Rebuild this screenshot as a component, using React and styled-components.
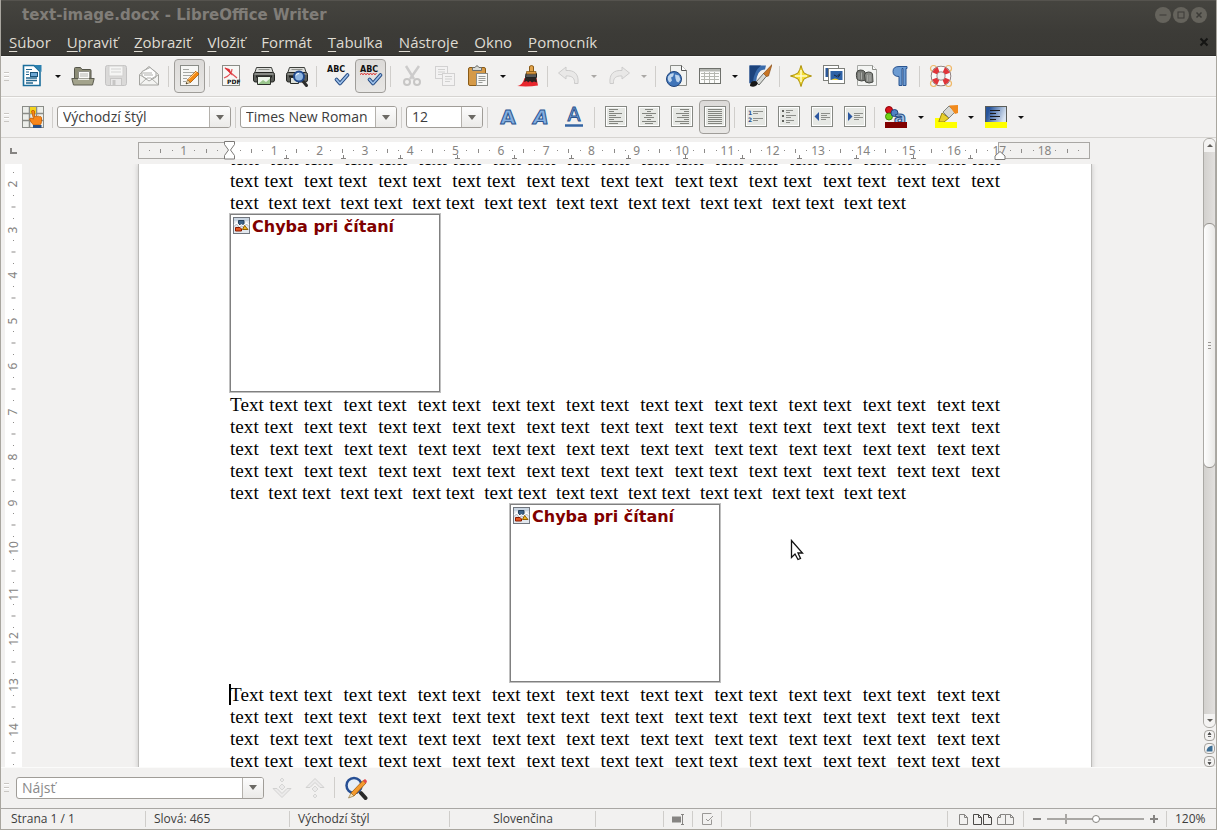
import React from 'react'
import styled, { createGlobalStyle, css } from 'styled-components';

const GlobalStyle = createGlobalStyle`
  * {
    box-sizing: border-box;
  }
  body {
    margin: 0;
    background: #f2f1f0;
  }
`;

const Window = styled.div`
  display: flex;
  flex-direction: column;
  height: 100vh;
  overflow: hidden;
  background: #f2f1f0;
  border: 1px solid #a9a69f;
  border-top: none;
  color: #3c3c3c;
  font-family: 'Open Sans', 'Noto Sans', sans-serif;
  font-size: 14px;
`;

/* title + menu */

const Header = styled.header`
  flex: none;
  margin: 0 -1px;
  height: 56px;
  background: linear-gradient(#45443f, #3c3b37 60%, #3a3935);
  border-top: 1px solid #55534e;
  border-bottom: 1px solid #2f2e2b;
`;

const TitleBar = styled.div`
  display: flex;
  align-items: center;
  height: 28px;
  padding: 0 10px 0 22px;
`;

const Title = styled.h1`
  flex: 1;
  margin: 0;
  font-family: 'DejaVu Sans', sans-serif;
  font-size: 15px;
  line-height: 24px;
  font-weight: bold;
  color: #807d78;
`;

const WindowButtons = styled.div`
  display: flex;
  gap: 2px;
`;

const WindowButton = styled.button`
  width: 16px;
  height: 16px;
  padding: 0;
  border: none;
  border-radius: 50%;
  background: #65635c;
  svg {
    display: block;
  }
`;

const MenuBar = styled.nav`
  display: flex;
  align-items: center;
  height: 26px;
  padding: 0 6px 0 9px;
`;

const MenuItem = styled.button`
  padding: 0;
  margin-right: 16px;
  border: none;
  background: none;
  color: #dfdbd2;
  font-family: inherit;
  font-size: 15px;
  line-height: 20px;
  &::first-letter {
    text-decoration: underline;
    text-underline-offset: 3px;
  }
`;

const CloseDocument = styled.button`
  margin-left: auto;
  padding: 0;
  width: 14px;
  height: 14px;
  border: none;
  background: none;
  svg {
    display: block;
  }
`;

/* toolbars */

const Toolbar = styled.div`
  flex: none;
  display: flex;
  align-items: center;
  height: 41px;
  box-shadow: inset 0 1px #fbfbfa;
  border-bottom: 1px solid #d6d4d1;
`;

const Grip = styled.span`
  width: 5px;
  height: 9px;
  margin: 0 7px 0 3px;
  background: repeating-linear-gradient(#c9c6c2 0 1px, #fff 1px 2px, transparent 2px 4px);
`;

const Separator = styled.span`
  flex: none;
  width: 8px;
  height: 21px;
  background: linear-gradient(#d0cecb, #d0cecb) 3px 0 / 1px 100% no-repeat;
`;

const ToolButton = styled.button`
  flex: none;
  display: flex;
  align-items: center;
  justify-content: center;
  width: 33px;
  height: 34px;
  padding: 0;
  border: none;
  background: none;
  svg {
    display: block;
    filter: ${p => (p.disabled ? 'grayscale(1)' : 'none')};
    opacity: ${p => (p.disabled ? 0.3 : 1)};
  }
  ${p => p.$pressed && css`
    background: linear-gradient(#dcdad8, #e8e7e5);
    background-clip: padding-box;
    border: 1px solid #9f9d99;
    border-radius: 4px;
    width: 31px;
    margin: 0 1px;
  `}
`;

const ArrowButton = styled.button`
  flex: none;
  width: 17px;
  height: 30px;
  padding: 0;
  border: none;
  background: none;
  &::after {
    content: '';
    display: block;
    width: 0;
    margin: 0 auto;
    border: 3px solid transparent;
    border-top-color: ${p => (p.disabled ? '#aaa8a5' : '#111')};
    border-bottom: none;
  }
`;

const ComboBox = styled.div`
  flex: none;
  display: flex;
  width: ${p => p.$width}px;
  height: 22px;
  margin: 0 1px 0 0;
  border: 1px solid #a09d98;
  border-radius: 3px;
  background: #fff;
  overflow: hidden;
`;

const ComboInput = styled.input`
  flex: 1;
  min-width: 0;
  padding: 0;
  margin-left: 5px;
  border: none;
  outline: none;
  background: none;
  color: #3c3c3c;
  font-family: inherit;
  font-size: 14px;
  line-height: 20px;
  &::placeholder {
    color: #8a8a8a;
  }
`;

const ComboArrow = styled.button`
  flex: none;
  width: 21px;
  padding: 0;
  border: none;
  border-left: 1px solid #b4b1ac;
  background: linear-gradient(#fcfcfc, #ebeae8);
  &::after {
    content: '';
    display: block;
    width: 0;
    margin: 0 auto;
    border: 4px solid transparent;
    border-top: 5px solid #6b6964;
    border-bottom: none;
  }
`;

/* document area */

const Main = styled.main`
  flex: 1;
  min-height: 0;
  display: flex;
`;

const WorkArea = styled.div`
  flex: 1;
  min-width: 0;
  display: grid;
  grid-template-columns: 21px 1fr;
  grid-template-rows: 26px 1fr;
`;

const RulerCorner = styled.div`
  padding: 10px 0 0 9px;
  svg {
    display: block;
  }
`;

const RulerRow = styled.div`
  padding: 4px 0 5px 3px;
`;

const Ruler = styled.div`
  position: relative;
  display: grid;
  width: 952px;
  height: 17px;
  margin: 0 auto;
`;

const Bands = styled.div`
  grid-area: 1 / 1;
  display: flex;
`;

const Band = styled.div`
  flex: ${p => p.$cm};
  background: ${p => (p.$margin ? '#f2f1f0' : '#fff')};
  border: ${p => (p.$margin ? '1px solid #a9a7a4' : 'none')};
  display: flex;
  align-items: flex-end;
`;

const TabStop = styled.span`
  flex: 0 0 57px;
  height: 4px;
  display: flex;
  justify-content: flex-end;
  svg {
    display: block;
    margin-right: -2px;
  }
`;

const Scale = styled.div`
  grid-area: 1 / 1;
  display: flex;
  align-items: center;
  padding: 0 6px;
`;

const scaleMark = css`
  flex: 1;
  min-width: 0;
  min-height: 0;
  display: flex;
  align-items: center;
  justify-content: center;
  color: #868482;
  font-family: 'Noto Sans', sans-serif;
  font-size: 12px;
  line-height: 16px;
  white-space: nowrap;
`;

const Mark = styled.span`
  ${scaleMark}
`;

const Tick = styled.i`
  flex: none;
  width: 1px;
  height: ${p => (p.$half ? 4 : 1)}px;
  background: #8e8c8a;
`;

const VerticalRuler = styled.div`
  min-height: 0;
  margin-left: 4px;
  overflow: hidden;
  background: #fff;
`;

const VerticalScale = styled.div`
  display: flex;
  flex-direction: column;
  height: 100%;
  margin-top: 3px;
`;

const VerticalMark = styled.span`
  ${scaleMark}
  span, i {
    transform: rotate(-90deg);
  }
`;

const IndentMarker = styled.svg`
  position: absolute;
  left: ${p => p.$left};
  top: -1px;
  margin-left: -6px;
`;

const Canvas = styled.div`
  position: relative;
  min-height: 0;
  overflow: hidden;
  padding-left: 5px;
`;

const Paper = styled.article`
  display: flow-root;
  width: 952px;
  min-height: 100%;
  margin: 0 auto;
  padding: 0 91px;
  background: #fff;
  box-shadow: 0 0 0 1px #bcbbb9, 0 0 6px rgba(0, 0, 0, 0.25);
`;

const DocumentText = styled.div`
  margin-top: -16px;
  font-size: 16px;
`;

/* 12pt shown at the 120% zoom level */
const Paragraph = styled.p`
  position: relative;
  margin: 0;
  color: #000;
  font-family: 'Liberation Serif', serif;
  font-size: 120%;
  line-height: 22px;
  text-align: justify;
  white-space: pre-wrap;
`;

const Caret = styled.span`
  position: absolute;
  left: -1px;
  top: 0;
  width: 2px;
  height: 21px;
  background: #000;
`;

const BrokenImage = styled.figure`
  display: flex;
  width: 210px;
  height: 178px;
  margin: 0 ${p => (p.$center ? 'auto' : '0')} 2px;
  padding: 2px;
  border: 1px solid #808080;
  box-shadow: 0 0 0 1px #c0c0c0;
  color: #800000;
  font-family: 'DejaVu Sans', sans-serif;
  font-size: 16px;
  line-height: 20px;
  font-weight: bold;
  svg {
    flex: none;
    display: block;
    margin-right: 2px;
  }
`;

const Pointer = styled.svg`
  position: absolute;
  left: 768px;
  top: 375px;
`;

/* scrollbar */

const ScrollColumn = styled.div`
  flex: none;
  width: 13px;
  display: flex;
  flex-direction: column;
  align-items: center;
`;

const ScrollBar = styled.div`
  flex: 1;
  width: 13px;
  display: flex;
  flex-direction: column;
  border: 1px solid #aba9a5;
  border-radius: 6px;
  background: linear-gradient(90deg, #d3d1ce, #e2e0de);
  overflow: hidden;
`;

const ScrollArrow = styled.button`
  flex: none;
  height: 13px;
  padding: 0;
  border: none;
  background: #f4f3f2;
  &::after {
    content: '';
    display: block;
    width: 0;
    margin: 0 auto;
    border: 3px solid transparent;
    ${p => (p.$up
    ? 'border-top: none; border-bottom-color: #5f5d59;'
    : 'border-bottom: none; border-top-color: #5f5d59;')}
  }
`;

const Trough = styled.div`
  flex: ${p => p.$size};
`;

const ScrollThumb = styled.div`
  flex: ${p => p.$size};
  display: flex;
  align-items: center;
  justify-content: center;
  margin: 0 -1px;
  border: 1px solid #96938e;
  border-radius: 6px;
  background: linear-gradient(90deg, #fdfdfd, #e9e8e6);
  &::after {
    content: '';
    width: 3px;
    height: 7px;
    background: repeating-linear-gradient(#9b9894 0 1px, transparent 1px 3px);
  }
`;

const PageButton = styled.button`
  flex: none;
  width: 11px;
  height: 11px;
  margin: 2px 0 0;
  padding: 0;
  border: 1px solid #a3a09b;
  border-radius: 4px;
  background: #f4f3f2;
  svg {
    display: block;
  }
`;

/* find bar and status bar */

const FindBar = styled.div`
  flex: none;
  display: flex;
  align-items: center;
  height: 41px;
  box-shadow: inset 0 1px #fbfbfa;
`;

const StatusBar = styled.footer`
  flex: none;
  display: flex;
  height: 21px;
  border-top: 1px solid #a9a7a4;
  font-size: 12px;
  line-height: 20px;
`;

const StatusCell = styled.div`
  flex: ${p => (p.$grow ? 1 : `0 0 ${p.$width}px`)};
  min-width: 0;
  display: flex;
  align-items: center;
  justify-content: ${p => p.$align || 'flex-start'};
  padding: 0 8px;
  gap: ${p => p.$gap || 0}px;
  white-space: nowrap;
  background: linear-gradient(#cfcdca, #cfcdca) 100% 2px / 1px 16px no-repeat;
  &:first-child {
    padding-left: 10px;
  }
  &:last-child {
    background: none;
  }
`;

const PlainButton = styled.button`
  flex: none;
  padding: 0;
  border: none;
  background: none;
  svg {
    display: block;
  }
`;

const ZoomSlider = styled.input`
  appearance: none;
  flex: 1;
  min-width: 0;
  height: 12px;
  margin: 0;
  background:
    linear-gradient(#a9a7a4, #a9a7a4) 18px 50% / 2px 10px no-repeat,
    linear-gradient(#a9a7a4, #a9a7a4) 0 50% / 100% 2px no-repeat;
  &::-webkit-slider-thumb {
    appearance: none;
    width: 8px;
    height: 8px;
    border: 1px solid #85837f;
    border-radius: 50%;
    background: #fff;
  }
`;

const Icon = ({ children, size = 24 }) => (
  <svg width={size} height={size} viewBox={`0 0 ${size} ${size}`} aria-hidden="true">{children}</svg>
)

const Sheet = ({ x = 2.5, y = 1.5, w = 18, h = 20 }) => (
  <rect x={x} y={y} width={w} height={h} fill="#f7f7f5" stroke="#8a8c87" />
)

const NewIcon = () => (
  <Icon>
    <path d="M2.500 1.500h10.500l6 6V21.500H2.500z" fill="#fff" stroke="#1b6e9c" strokeWidth="1.600" />
    <path d="M13 1h7.500v7z" fill="#2c81b0" />
    <path d="M5 5.500h6M5 8h3M5 10.500h3" stroke="#24678f" strokeWidth="1" />
    <path d="M5 14h11M5 16.500h11M5 19h7" stroke="#24678f" strokeWidth="1.300" />
    <rect x="9.500" y="8.500" width="7" height="4" fill="#6fa8d4" stroke="#1c5479" />
  </Icon>
)

const OpenIcon = () => (
  <Icon>
    <path d="M3.500 4.500q0-1 1-1h5l1.500 2h8q1 0 1 1V19h-16.500z" fill="#8c8c76" stroke="#55554a" />
    <path d="M7.500 7.500h11V17h-11z" fill="#fafaf8" stroke="#8e8e86" />
    <path d="M9 10h8M9 12h8" stroke="#b5b5b0" />
    <path d="M.800 14.500h22.400l-1.700 6.500H2.500z" fill="#a3a38c" stroke="#5c5c50" />
    <path d="M7 14.500h11v1.500H7z" fill="#e9e9e2" />
  </Icon>
)

const SaveIcon = () => (
  <Icon>
    <rect x="1.500" y="1.500" width="21" height="20" rx="2" fill="#a4a4a4" stroke="#5a5a5a" />
    <rect x="5" y="2" width="14" height="10" fill="#fff" stroke="#8a8a8a" />
    <path d="M7 5h10M7 8h10" stroke="#8f8f8f" />
    <rect x="6.500" y="14.500" width="11" height="7" fill="#d6d6d6" stroke="#666" />
    <rect x="8.500" y="16" width="3" height="5" fill="#666" />
  </Icon>
)

const MailIcon = () => (
  <Icon>
    <path d="M2.500 10.500 12 2.500l9.500 8v10.500h-19z" fill="#f4f4f2" stroke="#a4a4a0" />
    <path d="M5 12V7.500l8-4 6 5V13l-7 4z" fill="#fff" stroke="#a7a7a4" />
    <path d="m3 20.500 7-6.500h4l7 6.500M3 11l7 4M21 11l-7 4M6 9h9M7 11h9" fill="none" stroke="#b0b0ad" />
  </Icon>
)

const Pencil = () => (
  <>
    <path d="m9.500 16 8.500-9 3 3-8.500 8.500z" fill="#f58a13" stroke="#a85600" strokeWidth=".8" />
    <path d="m10.500 15.500 8.500-8.500" stroke="#ffd089" />
    <path d="m9.500 16-1.500 4 4.500-1.500z" fill="#f5dfb5" stroke="#7a5a20" strokeWidth=".6" />
    <path d="m8 20 .6-1.700 1 1.100z" fill="#222" />
  </>
)

const EditIcon = () => (
  <Icon>
    <Sheet x={2.5} />
    <path d="M5 5.500h6M5 8.500h11M5 11.500h9M5 14.500h4M5 17.500h3" stroke="#a5a7a3" />
    <Pencil />
  </Icon>
)

const PdfIcon = () => (
  <Icon>
    <Sheet x={3.5} w={17} />
    <path d="m6 4 12 10M13 5c0 4-3 7-8 9" stroke="#d9262c" strokeWidth="1.200" opacity=".8" fill="none" />
    <path d="m5.500 3.500 5 1.500 3 7z" fill="#e03036" />
    <text x="8" y="20" fontFamily="DejaVu Sans, sans-serif" fontSize="6" fontWeight="bold" fill="#111">PDF</text>
  </Icon>
)

const Printer = () => (
  <>
    <path d="M4.500 3.500h15l2 6h-19z" fill="#dcddda" stroke="#3e403c" />
    <path d="M6.500 5.500h11" stroke="#8f918c" />
    <rect x="1.500" y="8.500" width="21" height="9.500" rx="2" fill="#5b5d59" stroke="#232421" />
    <path d="M2.500 10h19" stroke="#b5b7b2" />
    <path d="M4 12.500h16" stroke="#1d1e1c" strokeWidth="2" />
  </>
)

const PrintIcon = () => (
  <Icon>
    <Printer />
    <path d="M5.500 12.500h13v8h-13z" fill="#eef5eb" stroke="#2b2d29" />
    <path d="m6 20 5-4 3 2 4-3.500v5.500z" fill="#9ac68d" />
  </Icon>
)

const PreviewIcon = () => (
  <Icon>
    <Printer />
    <path d="M5.500 13.500h8v6h-8z" fill="#dfe3dc" stroke="#2b2d29" />
    <path d="m17.500 16.500 4 5" stroke="#2c2c2c" strokeWidth="3" strokeLinecap="round" />
    <circle cx="14" cy="12.500" r="5" fill="#8fb6e2" stroke="#224a8c" strokeWidth="2" />
    <path d="M11 11.500a3 3 0 0 1 3-2" stroke="#fff" fill="none" />
  </Icon>
)

const SpellIcon = ({ auto }) => (
  <Icon>
    <text x="1" y="8" fontFamily="DejaVu Sans, sans-serif" fontSize="8" fontWeight="bold" fill="#111">ABC</text>
    {auto && <path d="m1 10.500 1.500-1 1.500 1 1.500-1 1.500 1 1.500-1 1.500 1 1.500-1 1.500 1 1.500-1 1.500 1 1.500-1" stroke="#e01818" fill="none" />}
    <path d="m10.500 15.500 3.500 4 7.500-8.500" fill="none" stroke="#234a83" strokeWidth="3.600" strokeLinecap="round" strokeLinejoin="round" />
    <path d="m10.500 15.500 3.500 4 7.500-8.500" fill="none" stroke="#9cbfe8" strokeWidth="1.800" strokeLinecap="round" strokeLinejoin="round" />
  </Icon>
)

const CutIcon = () => (
  <Icon>
    <path d="m6 2 8 13M19 2l-9 13" stroke="#777" strokeWidth="2.500" />
    <circle cx="7" cy="18" r="3" fill="none" stroke="#666" strokeWidth="2" />
    <circle cx="17" cy="18" r="3" fill="none" stroke="#666" strokeWidth="2" />
  </Icon>
)

const CopyIcon = () => (
  <Icon>
    <Sheet x={2.5} y={2.5} w={12} h={12} />
    <path d="M5 5.500h7M5 8h7M5 10.500h5" stroke="#888" />
    <Sheet x={9.5} y={9.5} w={12} h={12} />
    <path d="M12 12.500h7M12 15h7M12 17.500h5" stroke="#888" />
  </Icon>
)

const PasteIcon = () => (
  <Icon>
    <rect x="2.500" y="3.500" width="17" height="18" rx="1.500" fill="#d59a48" stroke="#8a5b17" />
    <path d="M6.500 6.500v-3h2.500q2-3.500 4 0h2.500v3z" fill="#d8dad6" stroke="#6c6e6a" />
    <Sheet x={10.5} y={9.5} w={11} h={12} />
    <path d="M12.500 12.500h7M12.500 14.500h7M12.500 16.500h7M12.500 18.500h4" stroke="#999b97" />
  </Icon>
)

const BrushIcon = () => (
  <Icon>
    <path d="M1 22c4-.5 6-3 7.500-8h12l1.500 7.500q-10 1.500-21 .5z" fill="#e8262d" />
    <path d="m9.500 13-1.500 5 3-1 1 1.500 2-1.500 2 1.500 2-1 3 1-1-5.500z" fill="#2a2322" />
    <path d="M10 9.500h10.500v4H9.500z" fill="#55575a" stroke="#222" />
    <path d="M13.500 8V5q-1-3.500 2-3.500t2 3.500v3z" fill="#e0a24a" stroke="#8a5b17" />
    <path d="M10.500 7.500h9.500v2.500h-9.500z" fill="#d9963e" stroke="#7c5213" strokeWidth=".7" />
  </Icon>
)

const UndoIcon = ({ flip }) => (
  <Icon>
    <path
      d="M1.500 9 9 3v3.500c8-.500 13 3 12 13h-3.500c.500-5-2-8-8.500-7.500V15z"
      fill="#d5d5d5"
      stroke="#777"
      transform={flip ? 'translate(24 0) scale(-1 1)' : undefined}
    />
  </Icon>
)

const LinkIcon = () => (
  <Icon>
    <path d="M5.500 1.500h11l5 5v15h-16z" fill="#f2f3f1" stroke="#8a8c87" />
    <path d="M16.500 1.500v5h5" fill="#fff" stroke="#555" />
    <circle cx="9" cy="15" r="7.500" fill="#3f74b8" stroke="#1f447c" />
    <path d="M3 12.500q3-4 6-3l-1 3-2 1 1 3-2 2q-3-2-2-6zM10 10.500l4 1 1.500 4-2 3-2-1-1-3z" fill="#bfd6ee" />
  </Icon>
)

const TableIcon = () => (
  <Icon>
    <rect x="1.500" y="4.500" width="21" height="15" fill="#fcfcfb" stroke="#6f716c" />
    <path d="M2 5h20v2.500H2z" fill="#b5b7b2" />
    <path d="M3 9.500h18M3 12.500h18M3 15.500h18M6.500 8v11M11.500 8v11M16.500 8v11" stroke="#b5b7b1" />
  </Icon>
)

const DrawIcon = () => (
  <Icon>
    <path d="M1.500 1.500H18l-1 4q-8 0-9 13l-6.500 1z" fill="#3a6bab" />
    <path d="M1.500 1.500H13Q6 7 5 18l-3.500 1z" fill="#1c437c" />
    <path d="m8 18 8-9 3 2.500L11 21z" fill="#d8dad7" stroke="#6c6e6a" />
    <path d="m15.500 9.500 8.500-9-3.500 11.500-2 .5z" fill="#c77424" stroke="#7c4510" strokeWidth=".6" />
    <path d="M2 22q0-5 5-5 4 1 2 4-3 3-7 1z" fill="#171717" />
  </Icon>
)

const StarIcon = () => (
  <Icon>
    <path d="M12 1.500q1 4 3 7.500 3.500 2 7.500 3-4 1-7.500 3-2 3.500-3 7.500-1-4-3-7.500-3.500-2-7.500-3 4-1 7.500-3 2-3.500 3-7.500z" fill="#f3dc33" stroke="#ad9108" strokeLinejoin="round" />
    <path d="M12 6v12M6 12h12" stroke="#fffbd0" strokeWidth="1.500" />
  </Icon>
)

const GalleryIcon = () => (
  <Icon>
    <rect x="1.500" y="1.500" width="15" height="15" fill="#fff" stroke="#7d7f7a" />
    <rect x="3.500" y="4" width="11" height="9" fill="#2b5796" />
    <rect x="6.500" y="4.500" width="16" height="15" fill="#fff" stroke="#7d7f7a" />
    <rect x="8.500" y="7" width="12" height="9" fill="#2f62a6" />
    <path d="M9 16q4-3 8 0z" fill="#f0cf38" />
    <path d="m12 11 3 1.500 3-3M16 13.500l2-3" stroke="#16263f" fill="none" />
  </Icon>
)

const FindIcon = () => (
  <Icon>
    <path d="M2.500 1.500h15l4 4v16h-19z" fill="#f4f5f3" stroke="#a5a7a3" />
    <path d="M17.500 1.500v4h4" fill="#fff" stroke="#8a8c87" />
    <path d="M1.500 9q.5-3 4-3t4.500 2l1 8q-5 2-8 0-2-1-1.500-7z" fill="#747672" stroke="#454743" />
    <path d="M9.500 11q.5-3 4-3t4 2l.500 8q-4 2-7.500 0z" fill="#8a8c88" stroke="#454743" />
    <path d="M4 8.500v7M6.500 8.500v7M12.500 11v6M15 11v6" stroke="#a9aba7" />
  </Icon>
)

const PilcrowIcon = () => (
  <Icon>
    <path d="M11 12.500Q5 12.500 5 7.500q0-5 6-5h8v2h-1v17h-3v-17h-1v17h-3z" fill="#6c9bd2" stroke="#2a5490" />
  </Icon>
)

const HelpIcon = () => (
  <Icon>
    <g fill="none" stroke="#efb868" strokeWidth="1.200">
      <circle cx="4.500" cy="4.500" r="3" /><circle cx="19.500" cy="4.500" r="3" />
      <circle cx="4.500" cy="19.500" r="3" /><circle cx="19.500" cy="19.500" r="3" />
    </g>
    <circle cx="12" cy="12" r="7" fill="#f2f1f0" stroke="#7c6a6a" strokeWidth="6.600" />
    <circle cx="12" cy="12" r="7" fill="none" stroke="#fafafa" strokeWidth="5" />
    <circle cx="12" cy="12" r="7" fill="none" stroke="#e0353a" strokeWidth="5" strokeDasharray="5.500 5.500" strokeDashoffset="-2.750" />
  </Icon>
)

const StylesIcon = () => (
  <Icon>
    <rect x="1.500" y="1.500" width="21" height="21" fill="#eceeea" stroke="#8a8c87" />
    <path d="M8.500 2v20M15.500 2v20M2 8.500h20M2 15.500h20" stroke="#8a8c87" strokeWidth="1.500" />
    <rect x="9" y="2" width="6" height="6.500" fill="#f4d31f" />
    <path d="M10.500 6q1.500-1.500 3 0v6l1-.5q1-1 2 0 1-.8 2 .2 1.500-.5 2 .8v4q0 3-2 3.500h-6q-3-3-4-6 1-2 4 0z" fill="#f7861b" stroke="#c25a00" strokeWidth=".8" />
    <path d="M12 20h8.500v3H12z" fill="#274f86" />
  </Icon>
)

const LetterIcon = ({ italic, underline }) => (
  <Icon>
    <text
      x="11"
      y={underline ? 16 : 19}
      textAnchor="middle"
      fontFamily="DejaVu Sans, sans-serif"
      fontSize={underline ? 19 : 20}
      fontWeight={underline ? 'normal' : 'bold'}
      fontStyle={italic ? 'italic' : 'normal'}
      fill="#83aee0"
      stroke="#2a5490"
      strokeWidth="1"
    >A</text>
    {underline && <path d="M2 20.500h18" stroke="#3465a4" strokeWidth="2.500" />}
  </Icon>
)

const alignments = {
  left: [[5, 14], [5, 10], [5, 18], [5, 12], [5, 17], [5, 10], [5, 19], [5, 14]],
  center: [[8, 16], [10, 14], [5, 19], [9, 15], [7, 17], [10, 14], [5, 19], [8, 16]],
  right: [[10, 19], [14, 19], [6, 19], [12, 19], [7, 19], [14, 19], [5, 19], [10, 19]],
  justify: [[5, 19], [5, 19], [5, 19], [5, 19], [5, 19], [5, 19], [5, 19], [5, 19]],
}

const Board = () => (
  <>
    <rect x="1.500" y="1.500" width="21" height="20" fill="#fff" stroke="#868883" />
    <rect x="3" y="3" width="18" height="17" fill="#e6e8e4" />
  </>
)

const AlignIcon = ({ kind }) => (
  <Icon>
    <Board />
    {alignments[kind].map(([a, b], i) => (
      <path key={i} d={`M${a} ${4.5 + i * 2}H${b}`} stroke="#83857f" />
    ))}
  </Icon>
)

const NumberingIcon = () => (
  <Icon>
    <Board />
    <text x="4" y="10" fontFamily="DejaVu Sans, sans-serif" fontSize="6" fontWeight="bold" fill="#2a5490">1</text>
    <text x="4" y="17" fontFamily="DejaVu Sans, sans-serif" fontSize="6" fontWeight="bold" fill="#2a5490">2</text>
    <path d="M9 6.500h10M9 8.500h5M9 13.500h10M9 15.500h5" stroke="#8d8f8a" />
  </Icon>
)

const BulletsIcon = () => (
  <Icon>
    <Board />
    <path d="M5 6h2M5 11h2M5 16h2" stroke="#60625d" strokeWidth="2" />
    <path d="M9 5.500h7M9 7.500h4M9 10.500h10M9 12.500h5M9 15.500h8M9 17.500h4" stroke="#8d8f8a" />
  </Icon>
)

const IndentIcon = ({ more }) => (
  <Icon>
    <Board />
    <path d={more ? 'M5 7v9l4.500-4.500z' : 'M9 7v9l-4.500-4.500z'} fill="#2b57a0" />
    <path d="M11 8.500h9M11 10.500h6M11 12.500h9M11 14.500h5" stroke="#8d8f8a" />
  </Icon>
)

const FontColorIcon = () => (
  <Icon>
    <circle cx="5" cy="5" r="3.500" fill="#d8121b" stroke="#8d0007" />
    <circle cx="5" cy="11.500" r="3.500" fill="#73d216" stroke="#3f8a03" />
    <circle cx="10.500" cy="8" r="3.500" fill="#4f82c4" stroke="#1f447c" />
    <text x="10" y="19" fontFamily="DejaVu Sans, sans-serif" fontSize="18" fontWeight="bold" fill="#a4c2e6" stroke="#234a83">a</text>
    <path d="M1 17h22v6H1z" fill="#800000" />
  </Icon>
)

const HighlightIcon = () => (
  <Icon>
    <path d="M1 13h8v5H1z" fill="#ff0" />
    <path d="m5 16 3-8 7 5-5 4H5z" fill="#e8cf2a" stroke="#9b860a" />
    <path d="m9 7 6-6 6 6-6 6z" fill="#d6d8d4" stroke="#82847f" />
    <path d="m15 .5 9-.5V8l-3 1z" fill="#f18a1c" />
    <path d="M1 17h22v6H1z" fill="#ff0" />
  </Icon>
)

const BackgroundIcon = () => (
  <Icon>
    <defs>
      <linearGradient id="blues" x1="0" x2="1" y1="0" y2=".3">
        <stop offset=".2" stopColor="#27549a" />
        <stop offset="1" stopColor="#d9e4f1" />
      </linearGradient>
    </defs>
    <rect x="1.500" y="1.500" width="21" height="18" fill="url(#blues)" stroke="#5b5d59" />
    <path d="M6 5.500h10M6 8.500h6M6 11.500h10M6 14.500h6" stroke="#1a1a1a" />
    <path d="M1 17h22v6H1z" fill="#ff0" />
  </Icon>
)

const FindStepIcon = ({ up }) => (
  <Icon>
    <g transform={up ? 'translate(0 24) scale(1 -1)' : undefined}>
      <path d="M3 12.500h4l5 5 5-5h4l-9 9z" fill="#ddd" stroke="#888" />
      <path d="m12 2 2 2-2 2-2-2zM12 8l3 3-3 3-3-3z" fill="#ddd" stroke="#999" />
    </g>
  </Icon>
)

const ReplaceIcon = () => (
  <Icon>
    <path d="m17 17 4.500 5" stroke="#2a2a2a" strokeWidth="4" strokeLinecap="round" />
    <circle cx="10" cy="9.500" r="7.500" fill="#e6eef8" stroke="#274f94" strokeWidth="2.500" />
    <path d="m7 17 12-12.500 3 2.500-12 13z" fill="#f39a2f" stroke="#a35c07" strokeWidth=".8" />
    <path d="m19 4.500 2-1.500q2 1 2 3l-1.500 1.500z" fill="#e34a4a" />
    <path d="m7 17-2.500 5 5.500-2z" fill="#f3dfb6" stroke="#8a682b" strokeWidth=".6" />
  </Icon>
)

const BrokenIcon = () => (
  <svg width="17" height="17" viewBox="0 0 17 17" aria-hidden="true">
    <rect x=".5" y=".5" width="16" height="16" fill="#e3e8ee" stroke="#70767e" />
    <path d="M1 1h15v3H1z" fill="#c9d5e2" />
    <path d="M5.500 3.500h5.500v3l-2 2h-1.500l-2-2z" fill="#3e6489" stroke="#243f5a" />
    <path d="m1 8.500 2.500-2.500 3 3.500 2-1.500 2 1.500 3-3.500 2.500 2.500" fill="none" stroke="#fff" strokeWidth="1.500" />
    <path d="m1 9.500 2.500-2.500 3 3.500 2-1.500 2 1.500 3-3.500 2.500 2.500" fill="none" stroke="#9aa1a9" strokeWidth=".8" />
    <path d="M2.500 10.500h4.500l1.500 1.500v2h-6z" fill="#e2531f" stroke="#8b1a00" />
    <path d="m9.500 12.500 2-4 3.500 4z" fill="#f3b51b" stroke="#8d5c00" />
  </svg>
)

const standardTools = [
  { label: 'Nový', icon: <NewIcon />, arrow: true },
  { label: 'Otvoriť', icon: <OpenIcon /> },
  { label: 'Uložiť', icon: <SaveIcon />, disabled: true },
  { label: 'Odoslať', icon: <MailIcon /> },
  'separator',
  { label: 'Upraviť súbor', icon: <EditIcon />, pressed: true },
  'separator',
  { label: 'Exportovať do PDF', icon: <PdfIcon /> },
  { label: 'Tlačiť', icon: <PrintIcon /> },
  { label: 'Ukážka strany', icon: <PreviewIcon /> },
  'separator',
  { label: 'Kontrola pravopisu', icon: <SpellIcon /> },
  { label: 'Automatická kontrola', icon: <SpellIcon auto />, pressed: true },
  'separator',
  { label: 'Vystrihnúť', icon: <CutIcon />, disabled: true },
  { label: 'Kopírovať', icon: <CopyIcon />, disabled: true },
  { label: 'Prilepiť', icon: <PasteIcon />, arrow: true },
  { label: 'Štetec formátu', icon: <BrushIcon /> },
  'separator',
  { label: 'Späť', icon: <UndoIcon />, arrow: true, disabled: true },
  { label: 'Obnoviť', icon: <UndoIcon flip />, arrow: true, disabled: true },
  'separator',
  { label: 'Odkaz', icon: <LinkIcon /> },
  { label: 'Tabuľka', icon: <TableIcon />, arrow: true },
  { label: 'Kresba', icon: <DrawIcon /> },
  'separator',
  { label: 'Navigátor', icon: <StarIcon /> },
  { label: 'Galéria', icon: <GalleryIcon /> },
  { label: 'Hľadať', icon: <FindIcon /> },
  { label: 'Netlačiteľné znaky', icon: <PilcrowIcon /> },
  'separator',
  { label: 'Pomocník', icon: <HelpIcon /> },
]

const formatTools = [
  { label: 'Tučné', icon: <LetterIcon /> },
  { label: 'Kurzíva', icon: <LetterIcon italic /> },
  { label: 'Podčiarknuté', icon: <LetterIcon underline /> },
  'separator',
  { label: 'Zarovnať vľavo', icon: <AlignIcon kind="left" /> },
  { label: 'Na stred', icon: <AlignIcon kind="center" /> },
  { label: 'Zarovnať vpravo', icon: <AlignIcon kind="right" /> },
  { label: 'Do bloku', icon: <AlignIcon kind="justify" />, pressed: true },
  'separator',
  { label: 'Číslovanie', icon: <NumberingIcon /> },
  { label: 'Odrážky', icon: <BulletsIcon /> },
  { label: 'Zmenšiť odsadenie', icon: <IndentIcon /> },
  { label: 'Zväčšiť odsadenie', icon: <IndentIcon more /> },
  'separator',
  { label: 'Farba písma', icon: <FontColorIcon />, arrow: true },
  { label: 'Zvýraznenie', icon: <HighlightIcon />, arrow: true },
  { label: 'Farba pozadia', icon: <BackgroundIcon />, arrow: true },
]

const Tools = ({ items }) => items.map((item, i) => (
  item === 'separator' ? <Separator key={i} /> : (
    <React.Fragment key={i}>
      <ToolButton aria-label={item.label} disabled={item.disabled} $pressed={item.pressed}>{item.icon}</ToolButton>
      {item.arrow && <ArrowButton aria-label={`${item.label}, možnosti`} disabled={item.disabled} />}
    </React.Fragment>
  )
))

const Combo = ({ label, width, ...rest }) => (
  <ComboBox $width={width}>
    <ComboInput aria-label={label} {...rest} />
    <ComboArrow aria-label={`${label}, zoznam`} />
  </ComboBox>
)

const menu = ['Súbor', 'Upraviť', 'Zobraziť', 'Vložiť', 'Formát', 'Tabuľka', 'Nástroje', 'Okno', 'Pomocník']

const pairs = count => Array(count).fill('text text').join('  ')

const paragraph = 'Text ' + pairs(51)
const paragraphEnd = 'text  ' + pairs(30)

// one mark per quarter of a centimetre, a number on every fourth
const horizontalMarks = Array.from({ length: 83 }, (_, i) => i + 1)
const verticalMarks = Array.from({ length: 53 }, (_, i) => i + 7)

const HorizontalRuler = () => (
  <Ruler>
    <Bands>
      <Band $cm={2} $margin />
      <Band $cm={17}>
        {Array.from({ length: 13 }, (_, i) => (
          <TabStop key={i}>
            <svg width="5" height="4" aria-hidden="true"><path d="M2.500 0v3M0 3.500h5" stroke="#868482" /></svg>
          </TabStop>
        ))}
      </Band>
      <Band $cm={2} $margin />
    </Bands>
    <Scale>
      {horizontalMarks.map(q => (
        <Mark key={q}>
          {q % 4 ? <Tick $half={q % 4 === 2} /> : q !== 8 && Math.abs(q / 4 - 2)}
        </Mark>
      ))}
    </Scale>
    <IndentMarker $left="92px" width="12" height="19" aria-hidden="true">
      <path d="M.500.500h10v3l-4 5.500 4 5.500v3.500H.500V14.500l4-5.500-4-5.500z" fill="#fff" stroke="#7c7a78" />
    </IndentMarker>
    <IndentMarker $left="calc(100% - 90px)" width="12" height="19" aria-hidden="true">
      <path d="M6 10.500 11 15v3.500H1V15z" fill="#fff" stroke="#7c7a78" />
    </IndentMarker>
  </Ruler>
)

const App = () => {
  return (
    <Window>
      <GlobalStyle />
      <Header>
        <TitleBar>
          <Title>text-image.docx - LibreOffice Writer</Title>
          <WindowButtons>
            <WindowButton aria-label="Minimalizovať">
              <Icon size={16}><path d="M4.500 8h7" stroke="#3c3b37" /></Icon>
            </WindowButton>
            <WindowButton aria-label="Maximalizovať">
              <Icon size={16}><rect x="5" y="5" width="6" height="6" fill="none" stroke="#3c3b37" /></Icon>
            </WindowButton>
            <WindowButton aria-label="Zavrieť">
              <Icon size={16}><path d="m5.500 5.500 5 5m0-5-5 5" stroke="#3c3b37" strokeWidth="1.500" /></Icon>
            </WindowButton>
          </WindowButtons>
        </TitleBar>
        <MenuBar>
          {menu.map(name => <MenuItem key={name}>{name}</MenuItem>)}
          <CloseDocument aria-label="Zavrieť dokument">
            <Icon size={14}><path d="m3.500 3.500 7 7m0-7-7 7" stroke="#151513" strokeWidth="2" /></Icon>
          </CloseDocument>
        </MenuBar>
      </Header>

      <Toolbar>
        <Grip />
        <Tools items={standardTools} />
      </Toolbar>
      <Toolbar>
        <Grip />
        <ToolButton aria-label="Štýly a formátovanie"><StylesIcon /></ToolButton>
        <Separator />
        <Combo label="Štýl" width={174} defaultValue="Východzí štýl" />
        <Separator />
        <Combo label="Písmo" width={157} defaultValue="Times New Roman" />
        <Separator />
        <Combo label="Veľkosť" width={77} defaultValue="12" />
        <Separator />
        <Tools items={formatTools} />
      </Toolbar>

      <Main>
        <WorkArea>
          <RulerCorner>
            <svg width="8" height="7" aria-hidden="true"><path d="M1 0v5h6" fill="none" stroke="#868482" strokeWidth="2" /></svg>
          </RulerCorner>
          <RulerRow><HorizontalRuler /></RulerRow>
          <VerticalRuler>
            <VerticalScale>
              {verticalMarks.map(q => (
                <VerticalMark key={q}>
                  {q % 4 ? <Tick $half={q % 4 === 2} /> : <span>{q / 4}</span>}
                </VerticalMark>
              ))}
            </VerticalScale>
          </VerticalRuler>
          <Canvas>
            <Paper>
              <DocumentText>
                <Paragraph>{paragraphEnd}</Paragraph>
                <BrokenImage><BrokenIcon />Chyba pri čítaní</BrokenImage>
                <Paragraph>{paragraph}</Paragraph>
                <BrokenImage $center><BrokenIcon />Chyba pri čítaní</BrokenImage>
                <Paragraph><Caret />{paragraph}</Paragraph>
              </DocumentText>
            </Paper>
            <Pointer width="14" height="22" aria-hidden="true">
              <path d="M1.500 1.500v17l3.500-3.500 3 5.500 2.500-1-2.500-5.500h4.500z" fill="#fff" stroke="#111" strokeWidth="1.300" />
            </Pointer>
          </Canvas>
        </WorkArea>
        <ScrollColumn>
          <ScrollBar>
            <ScrollArrow $up aria-label="Nahor" />
            <Trough $size={71} />
            <ScrollThumb $size={245} />
            <Trough $size={247} />
            <ScrollArrow aria-label="Nadol" />
          </ScrollBar>
          <PageButton aria-label="Predchádzajúca strana">
            <Icon size={9}><path d="m4.500 1.500 1.500 2h-3zM3 5.500h3" fill="#444" stroke="#444" strokeWidth=".8" /></Icon>
          </PageButton>
          <PageButton aria-label="Navigácia">
            <Icon size={9}><path d="M1.500 7.500q0-5 6-6v6z" fill="#3c6e95" /></Icon>
          </PageButton>
          <PageButton aria-label="Nasledujúca strana">
            <Icon size={9}><path d="m4.500 7.500 1.500-2h-3zM3 3h3" fill="#444" stroke="#444" strokeWidth=".8" /></Icon>
          </PageButton>
        </ScrollColumn>
      </Main>

      <FindBar>
        <Grip />
        <Combo label="Hľadaný text" width={248} placeholder="Nájsť" />
        <ToolButton aria-label="Hľadať ďalej" disabled><FindStepIcon /></ToolButton>
        <ToolButton aria-label="Hľadať späť" disabled><FindStepIcon up /></ToolButton>
        <Separator />
        <ToolButton aria-label="Nájsť a nahradiť"><ReplaceIcon /></ToolButton>
      </FindBar>

      <StatusBar>
        <StatusCell $width={145}>Strana 1 / 1</StatusCell>
        <StatusCell $width={144}>Slová: 465</StatusCell>
        <StatusCell $width={160}>Východzí štýl</StatusCell>
        <StatusCell $width={146} $align="center">Slovenčina</StatusCell>
        <StatusCell $width={68} />
        <StatusCell $width={29} $align="flex-end">
          <PlainButton aria-label="Režim výberu">
            <svg width="13" height="11" aria-hidden="true"><path d="M0 2.500h9v6H0z" fill="#868482" /><path d="M9 .500h3M9 10.500h3M10.500.500v10" stroke="#868482" /></svg>
          </PlainButton>
        </StatusCell>
        <StatusCell $width={29} $align="center">
          <PlainButton aria-label="Zmeny dokumentu">
            <svg width="12" height="12" aria-hidden="true"><path d="M9.500 6.500v5h-9V.500h9M4 6l2 2 5-5" fill="none" stroke="#9a9896" /></svg>
          </PlainButton>
        </StatusCell>
        <StatusCell $width={29} />
        <StatusCell $grow />
        <StatusCell $width={76} $gap={5} $align="center">
          <PlainButton aria-label="Jedna strana">
            <svg width="9" height="11" aria-hidden="true"><path d="M.500.500h5l3 3v7h-8zM5.500.500v3h3" fill="none" stroke="#868482" /></svg>
          </PlainButton>
          <PlainButton aria-label="Viac strán">
            <svg width="19" height="11" aria-hidden="true"><path d="M.500.500h5l3 3v7h-8zM5.500.500v3h3M10.500.500h5l3 3v7h-8zM15.500.500v3h3" fill="none" stroke="#4c4a48" /></svg>
          </PlainButton>
          <PlainButton aria-label="Kniha">
            <svg width="17" height="11" aria-hidden="true"><path d="M8.500.500h-5l-3 3v7h16v-7l-3-3zM8.500.500v10M3.500.500v3h-3M13.500.500v3h3" fill="none" stroke="#868482" /></svg>
          </PlainButton>
        </StatusCell>
        <StatusCell $width={143} $gap={5}>
          <PlainButton aria-label="Oddialiť">
            <svg width="10" height="10" aria-hidden="true"><path d="M1 5h8" stroke="#868482" strokeWidth="2" /></svg>
          </PlainButton>
          <ZoomSlider type="range" aria-label="Mierka" defaultValue="50" />
          <PlainButton aria-label="Priblížiť">
            <svg width="10" height="10" aria-hidden="true"><path d="M1 5h8M5 1v8" stroke="#868482" strokeWidth="2" /></svg>
          </PlainButton>
        </StatusCell>
        <StatusCell $width={49}>120%</StatusCell>
      </StatusBar>
    </Window>
  )
}

export default App
